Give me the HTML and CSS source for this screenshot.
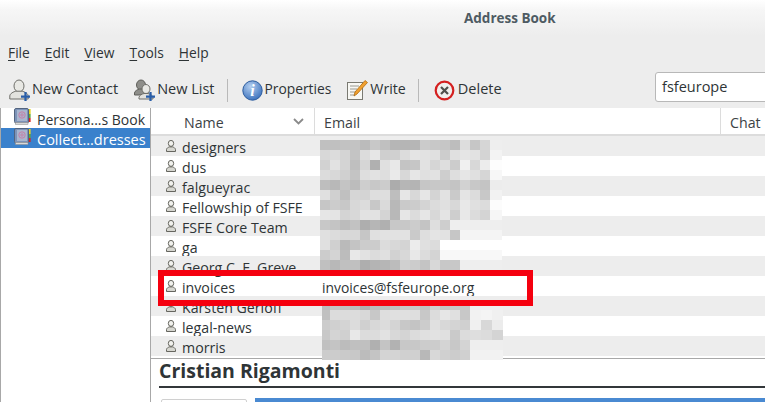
FILE: index.html
```html
<!DOCTYPE html>
<html lang="en">
<head>
<meta charset="utf-8">
<title>Address Book</title>
<link rel="stylesheet" href="styles.css">
</head>
<body>
<svg class="defs" width="0" height="0" aria-hidden="true">
  <defs>
    <symbol id="person" viewBox="0 0 10 12">
      <ellipse cx="5" cy="3.400" rx="2.700" ry="3" fill="#f0f0ec" stroke="#66665f"/>
      <path d="M.5 11.500V9.500c0-1.300 1.800-2.300 3-2.600h3c1.200.3 3 1.300 3 2.600v2z" fill="#d6d6d0" stroke="#66665f"/>
    </symbol>
    <symbol id="book" viewBox="0 0 17 17">
      <rect x="14" y="1" width="2.600" height="5" fill="#e3d21e"/>
      <rect x="14" y="6" width="2.600" height="4" fill="#5da83a"/>
      <rect x="14" y="10" width="2.600" height="4" fill="#d82020"/>
      <rect x=".5" y=".5" width="14" height="14.500" rx="1.500" fill="#7d93b8" stroke="#52647f"/>
      <rect x="3" y="2" width="10" height="11" fill="#a8b6cf"/>
      <circle cx="8" cy="7" r="3.200" fill="none" stroke="#c77fa8"/>
      <circle cx="8" cy="7" r="1.200" fill="none" stroke="#c77fa8"/>
      <rect x="1.500" y="14.500" width="12.500" height="2" fill="#d9d9d9" stroke="#8b8b8b" stroke-width=".5"/>
    </symbol>
    <symbol id="plus" viewBox="0 0 8 8">
      <path d="M3 0h2v3h3v2H5v3H3V5H0V3h3z" fill="#2a5ea8"/>
    </symbol>
    <radialGradient id="infoGrad" cx=".4" cy=".3" r=".8">
      <stop offset="0" stop-color="#b4cff0"/>
      <stop offset="1" stop-color="#2f68b8"/>
    </radialGradient>
  </defs>
</svg>

<div class="window">
  <header class="titlebar">Address Book</header>

  <nav class="menubar">
    <span class="menu"><u>F</u>ile</span>
    <span class="menu"><u>E</u>dit</span>
    <span class="menu"><u>V</u>iew</span>
    <span class="menu"><u>T</u>ools</span>
    <span class="menu"><u>H</u>elp</span>
  </nav>

  <div class="toolbar">
    <div class="tool tool-contact">
      <svg class="tool-icon" width="21" height="22" viewBox="0 0 21 22">
        <ellipse cx="10" cy="7" rx="5" ry="6" fill="#e8e8e4" stroke="#6f6f6a"/>
        <path d="M.8 20v-3c0-2.600 4-4.300 6-4.800h6.400c2 .5 6 2.200 6 4.800v3z" fill="#e2e2de" stroke="#6f6f6a"/>
        <use href="#plus" x="12" y="13" width="9" height="9"/>
      </svg>
      <span>New Contact</span>
    </div>
    <div class="tool tool-list">
      <svg class="tool-icon" width="21" height="22" viewBox="0 0 21 22">
        <ellipse cx="7" cy="6" rx="4.500" ry="5" fill="#8e8e8a" stroke="#5f5f5a"/>
        <path d="M.5 16v-2c0-2 3-3.500 5-4h3c2 .5 5 2 5 4v2z" fill="#8e8e8a" stroke="#5f5f5a"/>
        <ellipse cx="12" cy="10" rx="4" ry="4.500" fill="#e8e8e4" stroke="#6f6f6a"/>
        <path d="M5 20v-1.500c0-2 3-3.500 5-4h4c2 .5 5 2 5 4V20z" fill="#e2e2de" stroke="#6f6f6a"/>
        <use href="#plus" x="12" y="13" width="9" height="9"/>
      </svg>
      <span>New List</span>
    </div>
    <i class="tool-sep sep-a"></i>
    <div class="tool tool-props">
      <svg class="tool-icon" width="21" height="21" viewBox="0 0 21 21">
        <circle cx="10.500" cy="10.500" r="9.700" fill="url(#infoGrad)" stroke="#2d5c9e"/>
        <text x="10.500" y="16" class="info-i">i</text>
      </svg>
      <span>Properties</span>
    </div>
    <div class="tool tool-write">
      <svg class="tool-icon" width="21" height="22" viewBox="0 0 21 22">
        <rect x=".5" y="3.500" width="15" height="17" fill="#f8f8f4" stroke="#7a7a72"/>
        <path d="M3 7h9M3 10h7M3 13h6M3 16h5" stroke="#9a9a92"/>
        <path d="M7 17l1-4L18 1.500l2.500 2L10 15z" fill="#f0a030" stroke="#b06c10" stroke-width=".8"/>
      </svg>
      <span>Write</span>
    </div>
    <i class="tool-sep sep-b"></i>
    <div class="tool tool-delete">
      <svg class="tool-icon" width="21" height="21" viewBox="0 0 21 21">
        <circle cx="10.500" cy="10.500" r="8.800" fill="#f0f0ee" stroke="#d42020" stroke-width="2.200"/>
        <path d="M7 7l7 7M14 7l-7 7" stroke="#50504c" stroke-width="2.200"/>
      </svg>
      <span>Delete</span>
    </div>
    <div class="search">fsfeurope</div>
  </div>

  <div class="main">
    <aside class="sidebar">
      <div class="book"><svg width="17" height="17"><use href="#book"/></svg><span>Persona...s Book</span></div>
      <div class="book book-selected"><svg width="17" height="17"><use href="#book"/></svg><span>Collect...dresses</span></div>
    </aside>

    <section class="list">
      <div class="list-head">
        <div class="col col-name">Name
          <svg class="sort" width="11" height="7" viewBox="0 0 11 7"><path d="M1 1l4.500 4.500L10 1" fill="none" stroke="#8a8a8a" stroke-width="1.800"/></svg>
        </div>
        <div class="col col-email">Email</div>
        <div class="col col-chat">Chat</div>
      </div>
      <div class="row"><svg width="10" height="12"><use href="#person"/></svg><span class="name">designers</span></div>
      <div class="row"><svg width="10" height="12"><use href="#person"/></svg><span class="name">dus</span></div>
      <div class="row"><svg width="10" height="12"><use href="#person"/></svg><span class="name">falgueyrac</span></div>
      <div class="row"><svg width="10" height="12"><use href="#person"/></svg><span class="name">Fellowship of FSFE</span></div>
      <div class="row"><svg width="10" height="12"><use href="#person"/></svg><span class="name">FSFE Core Team</span></div>
      <div class="row"><svg width="10" height="12"><use href="#person"/></svg><span class="name">ga</span></div>
      <div class="row"><svg width="10" height="12"><use href="#person"/></svg><span class="name">Georg C. F. Greve</span></div>
      <div class="row"><svg width="10" height="12"><use href="#person"/></svg><span class="name">invoices</span><span class="email">invoices@fsfeurope.org</span></div>
      <div class="row"><svg width="10" height="12"><use href="#person"/></svg><span class="name">Karsten Gerloff</span></div>
      <div class="row"><svg width="10" height="12"><use href="#person"/></svg><span class="name">legal-news</span></div>
      <div class="row"><svg width="10" height="12"><use href="#person"/></svg><span class="name">morris</span></div>

      <div class="mosaic mosaic-top" id="mosaicTop"></div>
      <div class="mosaic mosaic-bottom" id="mosaicBottom"></div>
      <div class="highlight"></div>

      <div class="preview">
        <h1 class="preview-name">Cristian Rigamonti</h1>
        <div class="preview-body">
          <div class="preview-box"></div>
          <div class="preview-bar"></div>
        </div>
      </div>
    </section>
  </div>
</div>
<script src="mosaic.js"></script>
</body>
</html>
```
FILE: styles.css
```css
* { box-sizing: border-box; }
html, body { margin: 0; padding: 0; }
body {
  width: 765px;
  height: 402px;
  overflow: hidden;
  font-family: "Open Sans", "Noto Sans", sans-serif;
  font-size: 14.200px;
  color: #2e3436;
  background: #ededed;
}
.defs { position: absolute; }
.window {
  width: 765px;
  height: 402px;
  display: flex;
  flex-direction: column;
  overflow: hidden;
}
.titlebar {
  height: 43px;
  flex: none;
  padding: 10px 0 0 464px;
  font-size: 13.500px;
  line-height: 16px;
  font-weight: 700;
  color: #4e5b63;
  background: linear-gradient(#ffffff 0, #f6f6f6 10px, #ededed 36px);
}
.menubar {
  height: 29px;
  flex: none;
  display: flex;
  gap: 15px;
  padding: 1px 0 0 8px;
  font-size: 13.800px;
  line-height: 18px;
}
.menubar u { text-underline-offset: 2px; }
.toolbar {
  height: 36px;
  flex: none;
  display: flex;
  align-items: center;
  position: relative;
  padding-left: 9px;
}
.tool { display: flex; align-items: center; gap: 2px; white-space: nowrap; }
.tool span { margin-top: -3px; }
.tool-icon { flex: none; }
.tool-contact, .tool-list, .tool-delete { font-size: 14.500px; }
.tool-props { font-size: 13.800px; }
.info-i {
  font-family: "Liberation Serif", serif;
  font-style: italic;
  font-weight: 700;
  font-size: 16px;
  fill: #fff;
  text-anchor: middle;
}
.tool-list { margin-left: 16px; }
.tool-sep { width: 1px; height: 23px; background: #b9b9b9; flex: none; }
.sep-a { margin-left: 12px; }
.tool-props { margin-left: 14px; }
.tool-write { margin-left: 16px; }
.sep-b { margin-left: 12px; }
.tool-delete { margin-left: 15px; gap: 3px; }
.search {
  position: absolute;
  left: 655px;
  top: 0;
  width: 130px;
  height: 30px;
  padding-left: 6px;
  font-size: 14.500px;
  line-height: 27px;
  background: #fff;
  border: 1px solid #b8b8b8;
  border-radius: 3px;
}
.main { flex: 1; display: flex; min-height: 0; background: #fff; }
.sidebar {
  width: 151px;
  flex: none;
  border-left: 1px solid #a8a8a8;
  border-right: 1px solid #a8a8a8;
  background: #fff;
}
.book {
  height: 20px;
  display: flex;
  align-items: center;
  gap: 6px;
  padding-left: 13px;
  font-size: 14px;
  white-space: nowrap;
  overflow: hidden;
}
.book span { padding-top: 3px; }
.book svg { flex: none; margin-top: -3px; }
.book-selected { background: #3a81cc; color: #fff; font-size: 14.500px; }
.list { flex: 1; position: relative; display: flex; flex-direction: column; min-width: 0; }
.list-head {
  height: 28px;
  flex: none;
  display: flex;
  background: #fff;
  border-bottom: 2px solid #dcdcdc;
  color: #3c4245;
}
.col { display: flex; align-items: center; height: 26px; padding-top: 3px; border-right: 1px solid #dcdcdc; }
.col-name { width: 164px; padding-left: 33px; position: relative; }
.sort { position: absolute; left: 142px; top: 10px; }
.col-email { width: 406px; padding-left: 9px; }
.col-chat { flex: 1; padding-left: 9px; border-right: 0; }
.row {
  height: 20px;
  flex: none;
  display: flex;
  align-items: center;
  padding-left: 15px;
  white-space: nowrap;
  position: relative;
}
.row svg { flex: none; margin-top: -1px; }
.row span { padding-top: 3px; }
.row:nth-child(even) { background: #ededed; }
.name { margin-left: 6px; width: 140px; flex: none; }
.email { font-size: 13.900px; }
.mosaic { position: absolute; display: grid; }
.mosaic i { display: block; }
.mosaic-top {
  left: 169px;
  top: 32px;
  grid-template-columns: repeat(17, 10px) 12px;
  grid-auto-rows: 10px;
}
.mosaic-bottom {
  left: 171px;
  top: 192px;
  grid-template-columns: 8px repeat(14, 10px) repeat(3, 11px);
  grid-auto-rows: 10px;
}
.highlight {
  position: absolute;
  left: 7px;
  top: 162px;
  width: 375px;
  height: 36px;
  border: 6px solid #f5000f;
}
.preview {
  flex: 1;
  margin-top: 2px;
  border-top: 1px solid #a8a8a8;
  background: #fff;
  padding: 1px 0 0 8px;
  min-height: 0;
  overflow: hidden;
}
.preview-name {
  margin: 0;
  font-size: 19.500px;
  line-height: 22px;
  height: 28px;
  font-weight: 700;
  color: #2e3436;
  border-bottom: 2px solid #33373a;
}
.preview-body { display: flex; gap: 8px; margin-top: 10px; padding-left: 2px; }
.preview-box {
  width: 86px;
  height: 12px;
  margin-top: 1px;
  flex: none;
  background: #fff;
  border: 1px solid #d0d0d0;
  border-radius: 2px 2px 0 0;
}
.preview-bar { flex: 1; height: 12px; background: #4a8ad2; }
```
FILE: mosaic.js
```js
(function () {
  var upper = [
    "c0c0c2c3bbc8c0b6b5b6cbc8c6bdddc6d6ee",
    "d8dcd4c4dce6cfd0dce4e2e0cde0e5e2d4f3",
    "d2e2d4bfd6b0e0e8c4c6e2d6deccf0d8ecfd",
    "dcd8d0c4dee2deead8e6e0e2cedee6e0d6f7",
    "beb8c4bccec8ccacb6b4c6c8c8c4d2c8c4ec",
    "e0d0c0d6d4dedebee6d8e6d4e2cae4dcc8f2",
    "c6ccc8d8dcc8dab8caccd4dce0d8e8e0dcfc",
    "e6e4d4d8e2e2d4b8e6dce6d8e4cee8dcd4f6",
    "c8c4bcc2aeb6b0c8c8ccc4deceeeeeeeeeee",
    "e0dcd8d8c6e0e2e2e2cadee4e2c6f4f4f4f4",
    "e0d0bac4ccccdcd8d4ece0dcffffffffffff",
    "ccd4bce8e2dce0d2d8e8dcd4f8f8f8f8f8f8",
    "c0b8c0c0aeb4b6bcd0ccc4d8c8c8eeeeeeee"
  ];
  var lower = [
    "bcc4c0bcb0bcbcc0c8c8c0d0c4c8c8eeeeee",
    "c0dcdcdcd8c8dee0e0dec8dce6e0c8f2f4f0",
    "ccd0d4dcd0d8dcd4c8c4cce0d8d4d0f0d8ec",
    "c8d4d0e8dcdce2d8d4dce0e2e0cadcdedcd4",
    "c0c4bcc0c0b0c4b2c8c8ccccd4c8d4eeeeee",
    "cccccac8bcc4d4d4d0d0b8d8d0ccd0f2f2f2"
  ];
  function fill(id, rows) {
    var box = document.getElementById(id);
    rows.forEach(function (r) {
      for (var i = 0; i < r.length; i += 2) {
        var v = r.substr(i, 2);
        var c = document.createElement("i");
        c.style.backgroundColor = "#" + v + v + v;
        box.appendChild(c);
      }
    });
  }
  fill("mosaicTop", upper);
  fill("mosaicBottom", lower);
})();
```
